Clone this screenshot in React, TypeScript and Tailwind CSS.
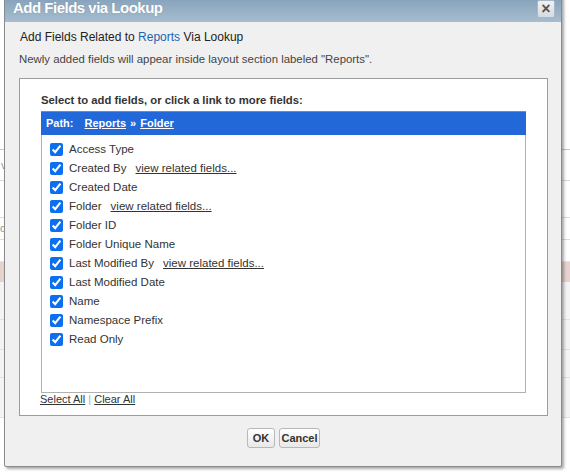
import React from "react";

const fields: { label: string; link?: boolean }[] = [
  { label: "Access Type" },
  { label: "Created By", link: true },
  { label: "Created Date" },
  { label: "Folder", link: true },
  { label: "Folder ID" },
  { label: "Folder Unique Name" },
  { label: "Last Modified By", link: true },
  { label: "Last Modified Date" },
  { label: "Name" },
  { label: "Namespace Prefix" },
  { label: "Read Only" },
];

function BackgroundPage() {
  return (
    <div className="flex flex-col w-full text-[11px] text-[#999]">
      <div className="h-[150px] border-b border-[#c8c8c8]" />
      <div className="h-[31px] border-b border-[#d8d8d8] flex items-center px-[1px]">vc</div>
      <div className="h-[37px] border-b border-[#dcdcdc]" />
      <div className="h-[22px] border-b border-[#dcdcdc] flex items-center">d</div>
      <div className="h-[22px] border-b border-[#e4e4e4]" />
      <div className="h-[20px] bg-[#e6d3cf]" />
      <div className="h-[38px] border-b border-[#e2e2e2] bg-[#f4f4f4]" />
      <div className="h-[30px] border-b border-[#e2e2e2] bg-[#f4f4f4]" />
      <div className="h-[28px] border-b border-[#e2e2e2] bg-[#f4f4f4]" />
      <div className="h-[40px] border-b border-[#e2e2e2] bg-[#f4f4f4]" />
      <div className="flex-1" />
    </div>
  );
}

export default function App() {
  return (
    <div className="relative w-[570px] h-[472px] overflow-hidden bg-white font-['Liberation_Sans',Arial,sans-serif]">
      <BackgroundPage />
      <div className="absolute left-[4px] top-[-9px] w-[558px] border border-[#8a8a8a] bg-[#f0f0f0] shadow-[2px_2px_3px_rgba(0,0,0,0.35)] rounded-b-[2px]">
        {/* title bar */}
        <div className="h-[30px] bg-gradient-to-b from-[#7d9bb5] to-[#a7bdcf] flex items-start justify-between pl-[8px] pr-[6px]">
          <span className="mt-[7px] text-[15px] leading-[17px] tracking-[-0.5px] font-bold text-white [text-shadow:0_0_1px_rgba(60,80,100,0.4)]">
            Add Fields via Lookup
          </span>
          <div className="mt-[8px] w-[18px] h-[18px] bg-gradient-to-b from-[#eef2f5] to-[#d3dce4] border border-[#a9b8c6] rounded-[2px] flex items-center justify-center text-[#555] text-[16px] leading-none font-bold">
            ×
          </div>
        </div>
        {/* body */}
        <div className="pt-[8px] pl-[14px] pr-[13px] pb-[18px] flex flex-col">
          <div className="pl-[1px] text-[12px] leading-[14px] text-[#222]">
            Add Fields Related to <span className="text-[#1d64b4]">Reports</span> Via Lookup
          </div>
          <div className="mt-[9px] text-[11.4px] leading-[13px] text-[#444]">
            Newly added fields will appear inside layout section labeled "Reports".
          </div>
          <div className="mt-[12px] bg-white border border-[#9c9c9c] pt-[15px] pb-[9px] px-[21px]">
            <div className="text-[11.3px] leading-[13px] font-bold text-[#333]">
              Select to add fields, or click a link to more fields:
            </div>
            <div className="mt-[4px] h-[282px] border border-[#b0b0b0] flex flex-col">
              <div className="-mx-[1px] -mt-[1px] h-[24px] bg-[#2268d8] border-t border-[#5a90e4] flex items-center pl-[5px] text-[11px] font-bold text-white">
                <span>Path:</span>
                <span className="ml-[11px] underline">Reports</span>
                <span className="mx-[4px]">»</span>
                <span className="underline">Folder</span>
              </div>
              <div className="pt-[5px] pl-[8px] flex flex-col">
                {fields.map((f) => (
                  <label key={f.label} className="h-[19px] flex items-center text-[11.5px] text-[#333]">
                    <input type="checkbox" defaultChecked className="w-[13px] h-[13px] accent-[#0b6ff0]" />
                    <span className="ml-[6px]">{f.label}</span>
                    {f.link && (
                      <span className="ml-[9px] underline text-[#333]">view related fields...</span>
                    )}
                  </label>
                ))}
              </div>
            </div>
            <div className="-ml-[1px] text-[11px] leading-[13px] text-[#333]">
              <span className="underline">Select All</span>
              <span className="text-[#aaa]"> | </span>
              <span className="underline">Clear All</span>
            </div>
          </div>
          <div className="mt-[12px] flex justify-center gap-[4px]">
            <button className="h-[20px] w-[28px] bg-gradient-to-b from-[#ffffff] to-[#e8e8e8] border border-[#b8b8b8] rounded-[3px] text-[11px] font-bold text-[#333]">
              OK
            </button>
            <button className="h-[20px] w-[41px] bg-gradient-to-b from-[#ffffff] to-[#e8e8e8] border border-[#b8b8b8] rounded-[3px] text-[11px] font-bold text-[#333]">
              Cancel
            </button>
          </div>
        </div>
      </div>
    </div>
  );
}
